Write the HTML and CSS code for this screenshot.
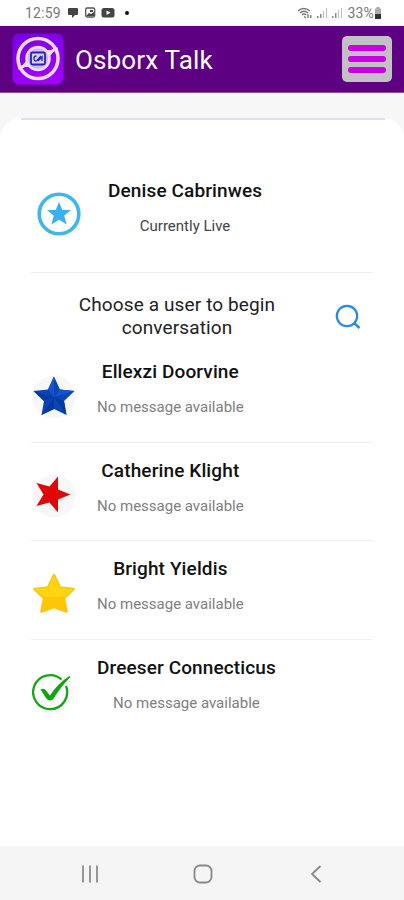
FILE: index.html
```html
<!DOCTYPE html>
<html lang="en">
<head>
    <meta charset="UTF-8">
    <meta name="viewport" content="width=device-width, initial-scale=1.0">
    <title>Osborx Talk</title>
    <link rel="stylesheet" href="styles.css">
</head>
<body>
    <div class="status-bar">
        <span class="clock">12:59</span>
        <svg class="status-icons" width="66" height="14" viewBox="0 0 66 14">
            <path d="M2 2h8q1 0 1 1v5q0 1-1 1H8l-3 3V9H2Q1 9 1 8V3q0-1 1-1z" fill="#444"/>
            <rect x="18.7" y="2" width="9" height="9" rx="1.5" fill="#fff" stroke="#555" stroke-width="1.3"/>
            <path d="M19 10l3-3 2 1 3-2v4zM23 4h3v2h-3z" fill="#444"/>
            <rect x="34.5" y="2" width="13" height="9.500" rx="2.5" fill="#444"/>
            <path d="M39.5 4.5v4.5l4-2.2z" fill="#fff"/>
            <circle cx="60" cy="7" r="2" fill="#111"/>
        </svg>
        <svg class="signal-icons" width="48" height="14" viewBox="0 0 48 14">
            <g fill="none" stroke="#777" stroke-width="1.4">
                <path d="M1 5q5.5-5 12 0M3 7q4-3.5 8 0M5 9q2-1.8 4 0M7 10.5l2 1.5"/>
                <path d="M11 8v4M13.8 9v3"/>
            </g>
            <g fill="#888">
                <path d="M20 10h1.5v2H20zM23 8h1.5v4H23zM35 10h1.5v2H35zM38 7h1.5v5H38z"/>
                <path d="M26 5h1v7h-1zM29 2h1v10h-1zM41 4h1v8h-1zM44 2h1v10h-1z" fill="#bbb"/>
            </g>
        </svg>
        <span class="battery-text">33%</span>
        <svg class="battery" width="8" height="13" viewBox="0 0 8 13">
            <path d="M2.5 0h3v1.5H7V12H1V1.5h1.5z" fill="#aaa"/>
            <path d="M1 7h6v5H1z" fill="#333"/>
        </svg>
    </div>

    <header class="header">
        <svg class="logo" width="52" height="52" viewBox="0 0 52 52">
            <defs>
                <linearGradient id="logo-bg" x1="0" y1="0" x2="0.3" y2="1">
                    <stop offset="0" stop-color="#7600e8"/>
                    <stop offset="1" stop-color="#a000fa"/>
                </linearGradient>
            </defs>
            <rect x="0.5" y="0.5" width="51" height="51" rx="7" fill="url(#logo-bg)"/>
            <circle cx="26" cy="25.5" r="20" fill="none" stroke="#f0dcff" stroke-width="3.5"/>
            <path d="M6 35q7-1 10-6M46 16q-7 1-10 6" fill="none" stroke="#f0dcff" stroke-width="3"/>
            <path d="M34 17l9 0-5 6zM18 34l-9 0 5-6z" fill="#f0dcff"/>
            <circle cx="26" cy="25.5" r="11.5" fill="#d3b5ff" stroke="#f0dcff" stroke-width="2.5"/>
            <rect x="19" y="19.5" width="14" height="12" rx="1.5" fill="#d6d0ff" stroke="#2a20b8" stroke-width="1.8"/>
            <path d="M24.500 23q-3 0-2.500 3t3 1.500l4-4.500M26 28l4-4v4" fill="none" stroke="#2c2bb5" stroke-width="1.4"/>
        </svg>
        <h1 class="title">Osborx Talk</h1>
        <button class="menu-button" aria-label="Menu">
            <span></span>
            <span></span>
            <span></span>
        </button>
    </header>

    <main class="page">
        <section class="card">
            <div class="card-line"></div>
            <div class="profile">
                <svg class="profile-icon" width="44" height="44" viewBox="0 0 44 44">
                    <circle cx="22" cy="22" r="19.8" fill="#fff" stroke="#3cb7f0" stroke-width="3.6"/>
                    <path d="M22 10l3.3 8h8.700l-6.800 5.700 2.500 8.800-7.700-4.800-7.700 4.800 2.500-8.800L10 18h8.700z" fill="#3cb0ee"/>
                </svg>
                <div class="details">
                    <div class="name">Denise Cabrinwes</div>
                    <div class="message live">Currently Live</div>
                </div>
            </div>

            <div class="search">
                <div class="search-text">Choose a user to begin conversation</div>
                <svg class="search-icon" width="26" height="26" viewBox="0 0 26 26">
                    <circle cx="12" cy="12" r="10.2" fill="none" stroke="#238bea" stroke-width="2.2"/>
                    <path d="M19 19l5.5 5" stroke="#238bea" stroke-width="2.4"/>
                </svg>
            </div>

            <div class="users">
                <div class="user">
                    <svg class="avatar" width="44" height="44" viewBox="0 0 44 44">
                        <circle cx="22" cy="22" r="21.5" fill="#f7f7f7"/>
                        <path d="M22 1.500L28 14.500 42.500 16 32 26 34.500 40 22 34 9.500 40 12 26 1.500 16 16 14.500z" fill="#0a45b8"/>
                        <path d="M22 22V1.500l-6 13zM22 22l20.500-6L28 14.500z" fill="#0f56cf"/>
                        <path d="M22 22L1.500 16 12 26zM22 22v12L9.500 40zM22 22l10 4 2.500 14z" fill="#083a9e"/>
                    </svg>
                    <div class="details">
                        <div class="name">Ellexzi Doorvine</div>
                        <div class="message">No message available</div>
                    </div>
                </div>
                <div class="user">
                    <svg class="avatar" width="44" height="44" viewBox="0 0 44 44">
                        <circle cx="22" cy="22" r="21.5" fill="#f7f7f7"/>
                        <path d="M26 2.500V15.500L38.500 20.500 26 25.500V38.500L17.500 28.500 4.500 32 11.500 20.500 4.500 9 17.500 12.500z" fill="#df0808"/>
                    </svg>
                    <div class="details">
                        <div class="name">Catherine Klight</div>
                        <div class="message">No message available</div>
                    </div>
                </div>
                <div class="user">
                    <svg class="avatar" width="44" height="44" viewBox="0 0 44 44">
                        <path d="M22 3l6 12.500L41.500 17 32 26l2.500 13.500L22 35 9.500 39.500 12 26 2.500 17 16 15.500z" fill="#fdc60b" stroke="#fdc60b" stroke-width="2.500" stroke-linejoin="round"/>
                        <path d="M2.500 17L16 15.500 22 3l6 12.500L41.500 17l-8 7q-11.500 2-23 0z" fill="#ffd412"/>
                    </svg>
                    <div class="details">
                        <div class="name">Bright Yieldis</div>
                        <div class="message">No message available</div>
                    </div>
                </div>
                <div class="user">
                    <svg class="avatar" width="44" height="44" viewBox="0 0 44 44">
                        <circle cx="22" cy="22" r="21.5" fill="#fcfcfc"/>
                        <path d="M29.5 8.500A17 17 0 1 0 34 15" fill="none" stroke="#16a516" stroke-width="2.3"/>
                        <path d="M8.500 18.500q3.500-2 5.500 1l4 5Q26 12 37.500 5l1 1q-10 10-16.500 21-4 5-8 0z" fill="#0da60d"/>
                    </svg>
                    <div class="details">
                        <div class="name">Dreeser Connecticus</div>
                        <div class="message">No message available</div>
                    </div>
                </div>
            </div>
        </section>
    </main>

    <nav class="nav-bar">
        <svg width="18" height="18" viewBox="0 0 18 18">
            <path d="M2 .5v17M9 .5v17M16 .5v17" stroke="#979797" stroke-width="2"/>
        </svg>
        <svg class="nav-home" width="20" height="20" viewBox="0 0 20 20">
            <rect x="1.500" y="1.500" width="17" height="17" rx="5.500" fill="none" stroke="#888" stroke-width="1.8"/>
        </svg>
        <svg width="12" height="18" viewBox="0 0 12 18">
            <path d="M10.500 1L2 9l8.500 8" fill="none" stroke="#888" stroke-width="1.8"/>
        </svg>
    </nav>
</body>
</html>
```

FILE: styles.css
```css
* {
    box-sizing: border-box;
}
body {
    display: flex;
    flex-direction: column;
    height: 900px;
    margin: 0;
    font-family: Roboto, sans-serif;
    background: #fff;
    color: #111;
}
svg {
    display: block;
    flex-shrink: 0;
}
.status-bar {
    display: flex;
    align-items: center;
    height: 26px;
    padding: 0 22px 0 25px;
    font-size: 14px;
    color: #777;
}
.clock {
    width: 36px;
    letter-spacing: 0.2px;
}
.status-icons {
    margin-left: 6px;
}
.signal-icons {
    margin-left: auto;
}
.battery-text {
    margin-left: 2px;
    letter-spacing: 0.2px;
}
.header {
    display: flex;
    align-items: center;
    height: 67px;
    padding: 0 12px;
    background: #5d0082;
    border-bottom: 1px solid #8a4fa3;
}
.title {
    margin: 1px auto 0 11px;
    font-size: 26px;
    font-weight: 400;
    line-height: 32px;
    letter-spacing: 0.15px;
    color: #fff;
}
.menu-button {
    display: flex;
    flex-direction: column;
    justify-content: center;
    gap: 5px;
    width: 50px;
    height: 46px;
    padding: 0 6px;
    background: #c3c1c5;
    border: none;
    border-radius: 5px;
}
.menu-button span {
    height: 6px;
    background: #c800e2;
    border-radius: 3px;
}
.page {
    flex: 1;
    padding-top: 25px;
    background: #f7f7f8;
}
.card {
    height: 100%;
    padding: 0 31px;
    background: #fff;
    border-radius: 21px 21px 0 0;
}
.card-line {
    height: 2px;
    margin: 0 -12px 0 -10px;
    background: #dedff3;
}
.profile {
    display: flex;
    height: 153px;
    padding: 59px 0 0 6px;
    border-bottom: 1px solid #eee;
}
.profile-icon {
    margin: 13px 27px 0 0;
}
.details {
    text-align: center;
}
.name {
    font-size: 19px;
    font-weight: 500;
    line-height: 24px;
    letter-spacing: 0.12px;
}
.message {
    margin-top: 13px;
    font-size: 15px;
    line-height: 20px;
    color: #808080;
}
.live {
    color: #444;
}
.search {
    display: flex;
    justify-content: space-between;
    height: 71px;
    padding: 20px 12px 0 33px;
}
.search-text {
    width: 226px;
    font-size: 19px;
    line-height: 23px;
    letter-spacing: 0.12px;
    text-align: center;
    color: #222;
}
.search-icon {
    margin-top: 11px;
}
.user {
    display: flex;
    height: 98.5px;
    padding-top: 16px;
    border-bottom: 1px solid #f0f0f0;
}
.user:last-child {
    border-bottom: none;
}
.avatar {
    margin: 15px 21px 0 1px;
}
.nav-bar {
    display: flex;
    align-items: center;
    justify-content: space-between;
    height: 54px;
    padding: 2px 82px 0 81px;
    background: #f5f5f5;
}
.nav-home {
    margin-right: 4px;
}
```
